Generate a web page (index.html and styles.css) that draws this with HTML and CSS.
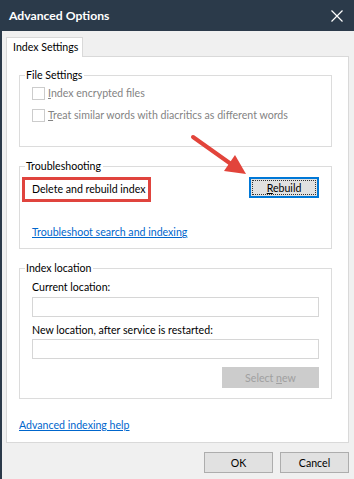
FILE: index.html
```html
<!DOCTYPE html>
<html lang="en">
<head>
  <meta charset="UTF-8" />
  <title>Advanced Options</title>
  <link rel="stylesheet" href="styles.css">
</head>
<body>

<div class="window">
  <div class="titlebar">
    <span class="title">Advanced Options</span>
    <svg class="close" width="12" height="12" viewBox="0 0 12 12">
      <path d="M0.5 0.5 L11.5 11.5 M11.5 0.5 L0.5 11.5" stroke="#fff" stroke-width="1.2" fill="none"/>
    </svg>
  </div>

  <div class="client">
    <div class="tabs">
      <div class="tab">Index Settings</div>
    </div>

    <div class="panel">
      <fieldset class="group files">
        <legend>File Settings</legend>
        <div class="check disabled"><span class="box"></span><span><u>I</u>ndex encrypted files</span></div>
        <div class="check disabled"><span class="box"></span><span><u>T</u>reat similar words with diacritics as different words</span></div>
      </fieldset>

      <fieldset class="group trouble">
        <legend>Troubleshooting</legend>
        <div class="rebuild-row">
          <span class="highlight">Delete and rebuild index</span>
          <button class="btn focused"><span class="focus-ring"><u>R</u>ebuild</span></button>
        </div>
        <a class="link trouble-link" href="#">Troubleshoot search and indexing</a>
      </fieldset>

      <fieldset class="group location">
        <legend>Index location</legend>
        <div class="label first">Current location:</div>
        <div class="field"></div>
        <div class="label">New location, after service is restarted:</div>
        <div class="field second"></div>
        <div class="right">
          <button class="btn wide" disabled>Select <u>n</u>ew</button>
        </div>
      </fieldset>

      <a class="link help-link" href="#">Advanced indexing help</a>
    </div>

    <div class="footer">
      <button class="btn">OK</button>
      <button class="btn">Cancel</button>
    </div>
  </div>

  <!-- annotation arrow -->
  <svg class="arrow" width="354" height="479" viewBox="0 0 354 479">
    <line x1="193" y1="137" x2="231" y2="164" stroke="#e2443b" stroke-width="4" stroke-linecap="round"/>
    <polygon points="246,174 224,171 235,155" fill="#e2443b"/>
  </svg>
</div>

</body>
</html>
```

FILE: styles.css
```css
body {
  margin: 0;
  background: #f0f0f0;
  font-family: Lato, "Noto Sans", sans-serif;
  font-size: 10.6px;
  color: #000;
}

.window {
  position: relative;
  width: 354px;
  height: 479px;
  box-sizing: border-box;
  border-left: 2px solid #2b3a4a;
  overflow: hidden;
}

.titlebar {
  height: 31px;
  background: #2b3a4a;
  color: #fff;
  display: flex;
  align-items: center;
  justify-content: space-between;
  margin-left: -2px;
  padding: 0 11px 0 9px;
}

.title {
  font-size: 12.2px;
  font-weight: bold;
}

.client {
  padding: 6px 5px 0 4px;
}

.tabs {
  display: flex;
}

.tab {
  background: #fff;
  border: 1px solid #d9d9d9;
  border-bottom: none;
  padding: 2px 6px 0 6px;
  width: 77px;
  white-space: nowrap;
  line-height: 15px;
  position: relative;
  z-index: 1;
  height: 20px;
  box-sizing: border-box;
  margin-bottom: -1px;
}

.panel {
  background: #fff;
  border: 1px solid #d9d9d9;
  height: 387px;
  box-sizing: border-box;
  padding: 11px 16px 0 12px;
}

.group {
  margin: 0;
  border: 1px solid #dcdcdc;
  padding: 0 12px 19px 12px;
  min-width: 0;
  line-height: 14px;
}

.group legend {
  padding: 0 2px 0 1px;
  margin-left: -7px;
  line-height: 14px;
}

.files {
  padding-bottom: 20px;
}

.check {
  display: flex;
  align-items: center;
  height: 22px;
  white-space: nowrap;
}

.check.disabled {
  color: #838383;
}

.box {
  width: 11px;
  height: 11px;
  border: 1px solid #cccccc;
  margin-right: 3px;
}

.trouble {
  margin-top: 12px;
  padding: 4px 12px 9px 2px;
}

.trouble legend {
  margin-left: 3px;
}

.rebuild-row {
  display: flex;
  justify-content: space-between;
  align-items: flex-start;
}

.highlight {
  border: 3px solid #e0443e;
  padding: 3px 3px 3px 7px;
  line-height: 13px;
}

.btn {
  font-family: inherit;
  font-size: 10.6px;
  background: #e1e1e1;
  border: 1px solid #adadad;
  color: #000;
  height: 21px;
  padding: 0;
  box-sizing: border-box;
}

.btn.focused {
  width: 70px;
  border: 2px solid #0078d7;
  padding: 1px;
}

.focus-ring {
  display: block;
  border: 1px dotted #333;
  height: 100%;
  box-sizing: border-box;
  line-height: 14px;
}

.link {
  color: #0066cc;
  display: inline-block;
  line-height: 14px;
}

.trouble-link {
  margin: 23px 0 0 10px;
}

.location {
  margin-top: 12px;
  padding: 0 12px 10px 12px;
}

.label {
  line-height: 14px;
  margin-top: 6px;
}

.label.first {
  margin-top: 5px;
}

.field {
  height: 20px;
  border: 1px solid #d6d6d6;
  box-sizing: border-box;
  margin-top: 3px;
}

.field.second {
  margin-top: 2px;
}

.right {
  display: flex;
  justify-content: flex-end;
  margin-top: 8px;
}

.btn.wide {
  width: 97px;
  background: #cccccc;
  border-color: #cccccc;
  color: #a0a0a0;
}

.help-link {
  margin-top: 19px;
}

.footer {
  display: flex;
  justify-content: flex-end;
  gap: 7px;
  padding-top: 9px;
}

.footer .btn {
  width: 69px;
}

.arrow {
  position: absolute;
  left: -2px;
  top: 0;
  pointer-events: none;
}
```
